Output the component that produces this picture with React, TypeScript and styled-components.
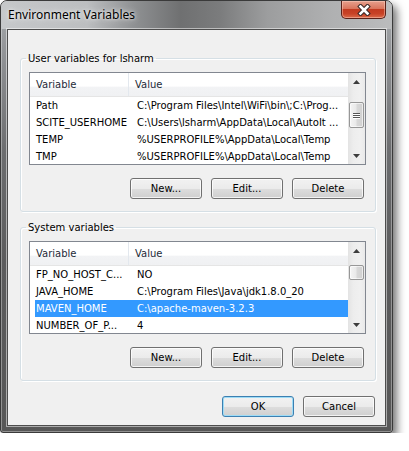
import styled, { createGlobalStyle } from "styled-components";

type Variable = { name: string; value: string; selected?: boolean };

const userVariables: Variable[] = [
  { name: "Path", value: "C:\\Program Files\\Intel\\WiFi\\bin\\;C:\\Prog..." },
  { name: "SCITE_USERHOME", value: "C:\\Users\\lsharm\\AppData\\Local\\AutoIt ..." },
  { name: "TEMP", value: "%USERPROFILE%\\AppData\\Local\\Temp" },
  { name: "TMP", value: "%USERPROFILE%\\AppData\\Local\\Temp" },
];

const systemVariables: Variable[] = [
  { name: "FP_NO_HOST_C...", value: "NO" },
  { name: "JAVA_HOME", value: "C:\\Program Files\\Java\\jdk1.8.0_20" },
  { name: "MAVEN_HOME", value: "C:\\apache-maven-3.2.3", selected: true },
  { name: "NUMBER_OF_P...", value: "4" },
];

const GlobalStyle = createGlobalStyle`
  html, body {
    margin: 0;
    padding: 0;
    background: #ffffff;
  }
  body {
    font-family: "DejaVu Sans", Tahoma, sans-serif;
    font-size: 10px;
    color: #000;
  }
  * {
    box-sizing: border-box;
  }
`;

const Window = styled.div`
  width: 393px;
  height: 433px;
  display: flex;
  flex-direction: column;
  border: 1px solid #3a3a3a;
  border-radius: 7px 7px 3px 3px;
  background: linear-gradient(180deg, #a9acaf 0px, #8e9093 60px, #6c6d6f 150px, #5c5c5d 260px, #575757 100%);
  box-shadow: inset 0 0 0 1px rgba(255, 255, 255, 0.35), 4px 5px 9px rgba(0, 0, 0, 0.55);
`;

const TitleBar = styled.div`
  height: 28px;
  flex: none;
  display: flex;
  justify-content: space-between;
  align-items: flex-start;
  padding-left: 7px;
  border-radius: 6px 6px 0 0;
  background: linear-gradient(
    90deg,
    #c6c8ca 0%,
    #bcbec0 22%,
    #8f9193 34%,
    #6f7071 46%,
    #7b7c7d 56%,
    #9c9d9e 68%,
    #afb0b1 84%,
    #bbbcbd 100%
  );
`;

const Title = styled.div`
  margin-top: 6px;
  font-family: "Noto Sans", "Open Sans", sans-serif;
  font-size: 12px;
  line-height: 16px;
  color: #000;
  text-shadow: 0 0 6px rgba(255, 255, 255, 0.9), 0 0 3px rgba(255, 255, 255, 0.7);
`;

const CloseButton = styled.div`
  width: 45px;
  height: 18px;
  margin-right: 6px;
  display: flex;
  align-items: center;
  justify-content: center;
  border: 1px solid #5a2119;
  border-top: none;
  border-radius: 0 0 5px 5px;
  background: linear-gradient(180deg, #e6a08d 0%, #d9755d 45%, #c23b20 50%, #c84226 75%, #dc6b4b 100%);
  box-shadow: inset 0 0 0 1px rgba(255, 215, 200, 0.45);
`;

const Client = styled.div`
  flex: 1;
  margin: 0 6px 6px;
  display: flex;
  flex-direction: column;
  padding: 0 9px 0 12px;
  border: 1px solid #4d4d4d;
  background: #f0f0f0;
  box-shadow: 0 0 0 1px rgba(255, 255, 255, 0.5);
`;

const GroupBox = styled.fieldset<{ $gap: number }>`
  margin: ${(p) => p.$gap}px 0 0;
  padding: 7px 9px 12px 8px;
  min-width: 0;
  border: 1px solid #d5dfe5;
  border-radius: 3px;
  box-shadow: inset 1px 1px 0 #fff, 1px 1px 0 #fff;
`;

const Legend = styled.legend`
  margin-left: -3px;
  padding: 0 2px;
  font-size: 10px;
  line-height: 13px;
`;

const ListView = styled.div`
  display: flex;
  height: 93px;
  border: 1px solid #828790;
  background: #fff;
`;

const ListBody = styled.div`
  flex: 1;
  min-width: 0;
  overflow: hidden;
`;

const Header = styled.div`
  display: grid;
  grid-template-columns: 99px 1fr;
  height: 24px;
  border-bottom: 1px solid #e5e5e5;
  background: linear-gradient(180deg, #ffffff 0%, #ffffff 58%, #f2f3f5 60%, #f0f1f3 100%);
`;

const HeaderCell = styled.div<{ $divider?: boolean }>`
  padding-left: 6px;
  line-height: 23px;
  color: #1e2a38;
  border-right: ${(p) => (p.$divider ? "1px solid #e3e8ee" : "none")};
`;

const Row = styled.div<{ $selected?: boolean }>`
  display: grid;
  grid-template-columns: 101px 1fr;
  height: 17px;
  margin-left: 5px;
  line-height: 17px;
  white-space: nowrap;
  background: ${(p) => (p.$selected ? "#3399ff" : "transparent")};
  color: ${(p) => (p.$selected ? "#fff" : "#000")};
`;

const Cell = styled.div`
  padding-left: 1px;
  overflow: hidden;
`;

const ScrollBar = styled.div`
  width: 17px;
  flex: none;
  display: flex;
  flex-direction: column;
  background: linear-gradient(90deg, #e3e3e3 0%, #ededed 30%, #f0f0f0 70%, #e9e9e9 100%);
`;

const ArrowButton = styled.div`
  height: 17px;
  flex: none;
  display: flex;
  align-items: center;
  justify-content: center;
`;

const Track = styled.div`
  flex: 1;
  padding: 0 1px;
`;

const Thumb = styled.div<{ $offset: number; $size: number }>`
  margin-top: ${(p) => p.$offset}px;
  height: ${(p) => p.$size}px;
  display: flex;
  flex-direction: column;
  align-items: center;
  justify-content: center;
  gap: 1px;
  border: 1px solid #979797;
  border-radius: 2px;
  background: linear-gradient(90deg, #f4f4f4 0%, #e9e9e9 45%, #d8d8d8 55%, #d0d0d0 100%);
  box-shadow: inset 0 0 0 1px rgba(255, 255, 255, 0.6);
`;

const Grip = styled.span`
  width: 7px;
  height: 1px;
  background: #555;
  box-shadow: 0 1px 0 #fff;
`;

const ButtonRow = styled.div<{ $top: number; $right: number }>`
  display: flex;
  justify-content: flex-end;
  gap: 9px;
  margin-top: ${(p) => p.$top}px;
  padding-right: ${(p) => p.$right}px;
`;

const Button = styled.button<{ $default?: boolean }>`
  width: 72px;
  height: 21px;
  padding: 0;
  font-family: inherit;
  font-size: 10px;
  color: #000;
  border: 1px solid ${(p) => (p.$default ? "#3c7fb1" : "#707070")};
  border-radius: 3px;
  background: linear-gradient(180deg, #f2f2f2 0%, #ebebeb 50%, #dddddd 51%, #cfcfcf 100%);
  box-shadow: inset 0 0 0 1px ${(p) => (p.$default ? "#9edcf6" : "rgba(255, 255, 255, 0.75)")};
`;

const CloseIcon = () => (
  <svg width="14" height="12" viewBox="0 0 14 12">
    <g strokeLinecap="square">
      <path d="M3.5 2.5 L10.5 9.5 M10.5 2.5 L3.5 9.5" stroke="#3b2a28" strokeWidth="4.6" />
      <path d="M3.5 2.5 L10.5 9.5 M10.5 2.5 L3.5 9.5" stroke="#ffffff" strokeWidth="2.6" />
    </g>
  </svg>
);

const Arrow = ({ down }: { down?: boolean }) => (
  <svg width="7" height="4" viewBox="0 0 7 4">
    <polygon points={down ? "0,0 7,0 3.5,4" : "0,4 7,4 3.5,0"} fill="#3d3d3d" />
  </svg>
);

const VariableList = ({
  rows,
  thumbOffset,
  thumbSize,
}: {
  rows: Variable[];
  thumbOffset: number;
  thumbSize: number;
}) => (
  <ListView>
    <ListBody>
      <Header>
        <HeaderCell $divider>Variable</HeaderCell>
        <HeaderCell>Value</HeaderCell>
      </Header>
      {rows.map((r) => (
        <Row key={r.name} $selected={r.selected}>
          <Cell>{r.name}</Cell>
          <Cell>{r.value}</Cell>
        </Row>
      ))}
    </ListBody>
    <ScrollBar>
      <ArrowButton>
        <Arrow />
      </ArrowButton>
      <Track>
        <Thumb $offset={thumbOffset} $size={thumbSize}>
          {thumbSize > 20 && (
            <>
              <Grip />
              <Grip />
              <Grip />
            </>
          )}
        </Thumb>
      </Track>
      <ArrowButton>
        <Arrow down />
      </ArrowButton>
    </ScrollBar>
  </ListView>
);

const ActionButtons = () => (
  <ButtonRow $top={13} $right={2}>
    <Button>New...</Button>
    <Button>Edit...</Button>
    <Button>Delete</Button>
  </ButtonRow>
);

export default function App() {
  return (
    <>
      <GlobalStyle />
      <Window>
        <TitleBar>
          <Title>Environment Variables</Title>
          <CloseButton>
            <CloseIcon />
          </CloseButton>
        </TitleBar>
        <Client>
          <GroupBox $gap={22}>
            <Legend>User variables for lsharm</Legend>
            <VariableList rows={userVariables} thumbOffset={12} thumbSize={26} />
            <ActionButtons />
          </GroupBox>
          <GroupBox $gap={9}>
            <Legend>System variables</Legend>
            <VariableList rows={systemVariables} thumbOffset={6} thumbSize={15} />
            <ActionButtons />
          </GroupBox>
          <ButtonRow $top={15} $right={1}>
            <Button $default>OK</Button>
            <Button>Cancel</Button>
          </ButtonRow>
        </Client>
      </Window>
    </>
  );
}
